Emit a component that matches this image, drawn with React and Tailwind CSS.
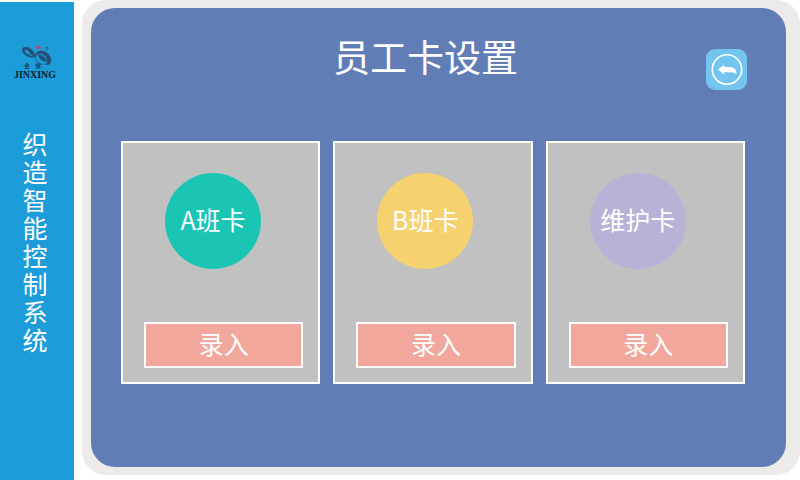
const cards = [
  { name: 'A班卡', circle: 'bg-[#1bc5b4]' },
  { name: 'B班卡', circle: 'bg-[#f6d170]' },
  { name: '维护卡', circle: 'bg-[#b9b1d6]' },
];

function Logo() {
  return (
    <div className="flex w-full flex-col items-center text-[#10222e]">
      <svg className="h-[25px] w-[36px]" viewBox="0 0 36 25" role="img" aria-label="金信">
        <g fill="#24507a">
          <path d="M5 5c0-4 6-4 9-1 3 2 4 5 5 9-2-3-5-7-9-8-3-1-3 1-1 3 3 2 6 3 9 5C13 13 5 10 5 5z" />
          <path d="M10 4c4 1 7 5 9 9-4-2-7-5-9-9z" />
          <path d="M18 13c0-6 4-9 9-7 5 2 8 7 7 11 0 3-4 4-7 2 3 0 4-2 3-4-1-4-4-6-7-6-2 0-4 1-5 4z" />
          <path d="M21 10c4-1 8 3 9 7-4 0-8-3-9-7z" />
          <path d="M18 13c2 4 5 6 9 6-3 2-8-1-9-6z" />
        </g>
        <path d="M21 0v5M18.500 2.500h5" stroke="#c8435f" strokeWidth="1.500" />
        <circle cx="30" cy="3.500" r="1.200" fill="none" stroke="#24507a" strokeWidth=".7" />
        <text x="7" y="23" fontSize="6" fill="currentColor" fontFamily="Noto Sans CJK SC, sans-serif">
          金
        </text>
        <text x="18" y="23" fontSize="6" fill="currentColor" fontFamily="Noto Sans CJK SC, sans-serif">
          信
        </text>
      </svg>
      <span className="font-['Liberation_Serif',serif] text-[10px] leading-[10px] font-bold">
        JINXING
      </span>
    </div>
  );
}

function BackButton() {
  return (
    <button
      type="button"
      aria-label="返回"
      className="mt-[18px] flex size-[41px] shrink-0 items-center justify-center rounded-[9px] bg-[#73c5f0]"
    >
      <svg className="size-[33px]" viewBox="0 0 33 33" aria-hidden="true">
        <circle cx="17" cy="16.500" r="14.700" fill="none" stroke="#fff" strokeWidth="1.600" />
        <path
          d="M8 16.500 14.500 11.500 14 14h6c4 0 6.500 2 6.500 7.500-1.500-1.700-3.500-2.300-6.500-2.300h-6l.5 2.500z"
          fill="#fff"
        />
      </svg>
    </button>
  );
}

function StaffCard({ name, circle }) {
  return (
    <section className="flex flex-col border-2 border-white bg-[#c1c1c1] pt-[30px] pr-[15px] pb-[14px] pl-[21px]">
      <h2
        className={`ml-[21px] flex size-24 items-center justify-center rounded-full pb-1 text-[25px] leading-8 ${circle}`}
      >
        {name}
      </h2>
      <button
        type="button"
        aria-label={`${name}录入`}
        className="mt-[53px] h-[46px] border-2 border-white bg-[#f1a79c] pb-1 text-[25px] leading-8"
      >
        录入
      </button>
    </section>
  );
}

export default function App() {
  return (
    <div className="flex min-h-screen bg-white font-['Noto_Sans_CJK_SC',sans-serif] text-white">
      <aside className="mt-[2px] flex w-[74px] shrink-0 flex-col items-center bg-[#1c9cd8] pt-[43px] pr-1">
        <Logo />
        <p className="mt-[49px] w-[26px] text-center text-[25px] leading-[28px] break-all">
          织造智能控制系统
        </p>
      </aside>
      <div className="mb-[5px] ml-2 flex flex-1 rounded-[24px] bg-[#ecebea] pt-2 pr-[14px] pb-2 pl-[9px]">
        <main className="flex-1 rounded-[24px] bg-[#607db5] pr-[39px] pb-20 pl-[30px]">
          <header className="flex items-start pt-[23px]">
            <h1 className="flex-1 pl-6 text-center text-[37px] leading-[50px]">员工卡设置</h1>
            <BackButton />
          </header>
          <div className="mt-[51px] mr-[2px] grid grid-cols-3 gap-[13px]">
            {cards.map((card) => (
              <StaffCard key={card.name} {...card} />
            ))}
          </div>
        </main>
      </div>
    </div>
  );
}
